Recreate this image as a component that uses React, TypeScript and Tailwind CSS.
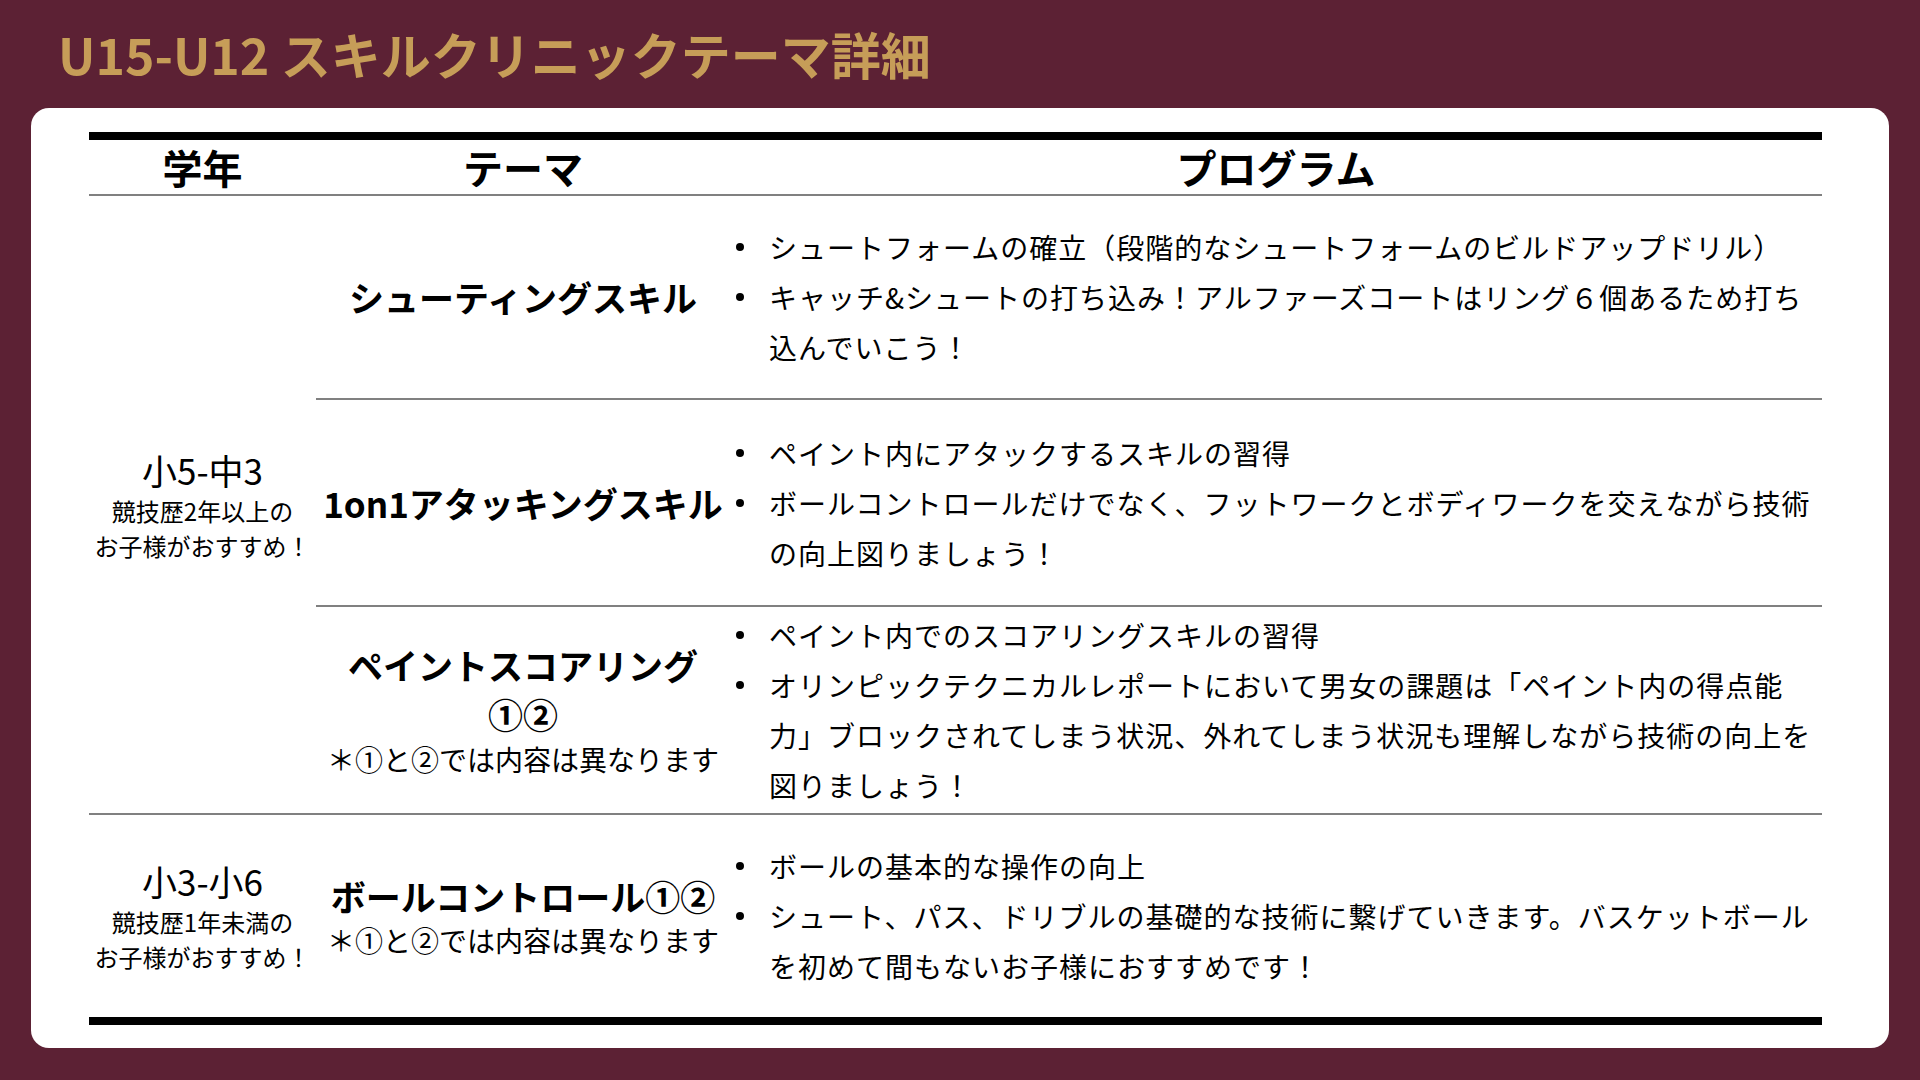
import React from 'react';

const font = { fontFamily: '"Noto Sans CJK JP", "Noto Sans", sans-serif' };

type Row = {
  theme: React.ReactNode;
  items: React.ReactNode[];
  h: string;
};

const Bullet: React.FC<{ children: React.ReactNode }> = ({ children }) => (
  <li className="flex items-start">
    <span className="w-[39px] shrink-0 flex pl-[6px] pt-[21px]">
      <span className="block w-[8px] h-[8px] rounded-full bg-black" />
    </span>
    <span className="leading-[50px]">{children}</span>
  </li>
);

const groupOne: Row[] = [
  {
    h: 'h-[204px]',
    theme: <p className="text-[35px] font-bold leading-[50px]">シューティングスキル</p>,
    items: [
      <>シュートフォームの確立（段階的なシュートフォームのビルドアップドリル）</>,
      <>
        キャッチ&amp;シュートの打ち込み！アルファーズコートはリング６個あるため打ち
        <br />
        込んでいこう！
      </>,
    ],
  },
  {
    h: 'h-[207px]',
    theme: <p className="text-[35px] font-bold leading-[50px] whitespace-nowrap">1on1アタッキングスキル</p>,
    items: [
      <>ペイント内にアタックするスキルの習得</>,
      <>
        ボールコントロールだけでなく、フットワークとボディワークを交えながら技術
        <br />
        の向上図りましょう！
      </>,
    ],
  },
  {
    h: 'h-[206px]',
    theme: (
      <>
        <p className="text-[35px] font-bold leading-[50px]">ペイントスコアリング</p>
        <p className="text-[35px] font-bold leading-[48px]">①②</p>
        <p className="text-[28px] leading-[42px] whitespace-nowrap">＊①と②では内容は異なります</p>
      </>
    ),
    items: [
      <>ペイント内でのスコアリングスキルの習得</>,
      <>
        オリンピックテクニカルレポートにおいて男女の課題は「ペイント内の得点能
        <br />
        力」ブロックされてしまう状況、外れてしまう状況も理解しながら技術の向上を
        <br />
        図りましょう！
      </>,
    ],
  },
];

const groupTwo: Row = {
  h: 'h-[202px]',
  theme: (
    <>
      <p className="text-[35px] font-bold leading-[48px] whitespace-nowrap">ボールコントロール①②</p>
      <p className="text-[28px] leading-[40px] whitespace-nowrap">＊①と②では内容は異なります</p>
    </>
  ),
  items: [
    <>ボールの基本的な操作の向上</>,
    <>
      シュート、パス、ドリブルの基礎的な技術に繋げていきます。バスケットボール
      <br />
      を初めて間もないお子様におすすめです！
    </>,
  ],
};

const ThemeRow: React.FC<{ row: Row }> = ({ row }) => (
  <div className={`flex ${row.h}`}>
    <div className="w-[414px] shrink-0 flex flex-col items-center justify-center text-center">{row.theme}</div>
    <ul className="flex-1 flex flex-col justify-center text-[28px] tracking-[1px] whitespace-nowrap">
      {row.items.map((it, i) => (
        <Bullet key={i}>{it}</Bullet>
      ))}
    </ul>
  </div>
);

const Grade: React.FC<{ main: string; sub1: string; sub2: string }> = ({ main, sub1, sub2 }) => (
  <div className="w-[227px] shrink-0 flex flex-col items-center justify-center text-center">
    <p className="text-[35px] leading-[46px]">{main}</p>
    <p className="text-[24px] leading-[35px] whitespace-nowrap">{sub1}</p>
    <p className="text-[24px] leading-[35px] whitespace-nowrap">{sub2}</p>
  </div>
);

export default function App() {
  return (
    <div className="w-[1920px] h-[1080px] bg-[#5c2134] px-[31px] flex flex-col text-black" style={font}>
      <div className="h-[108px] flex items-center pl-[27px] pb-[2px]">
        <h1 className="text-[50px] font-bold text-[#c69d58]">U15-U12 スキルクリニックテーマ詳細</h1>
      </div>
      <div className="h-[940px] bg-white rounded-[18px] pt-[24px] pl-[58px] pr-[67px]">
        <div className="border-t-[8px] border-b-[8px] border-black">
          <div className="flex h-[56px] border-b-2 border-[#808080] text-[40px] font-bold items-center">
            <div className="w-[227px] text-center">学年</div>
            <div className="w-[414px] text-center">テーマ</div>
            <div className="flex-1 text-center">プログラム</div>
          </div>
          <div className="flex border-b-2 border-[#808080]">
            <Grade main="小5-中3" sub1="競技歴2年以上の" sub2="お子様がおすすめ！" />
            <div className="flex-1 flex flex-col divide-y-2 divide-[#808080]">
              {groupOne.map((r, i) => (
                <ThemeRow key={i} row={r} />
              ))}
            </div>
          </div>
          <div className="flex">
            <Grade main="小3-小6" sub1="競技歴1年未満の" sub2="お子様がおすすめ！" />
            <div className="flex-1">
              <ThemeRow row={groupTwo} />
            </div>
          </div>
        </div>
      </div>
    </div>
  );
}
